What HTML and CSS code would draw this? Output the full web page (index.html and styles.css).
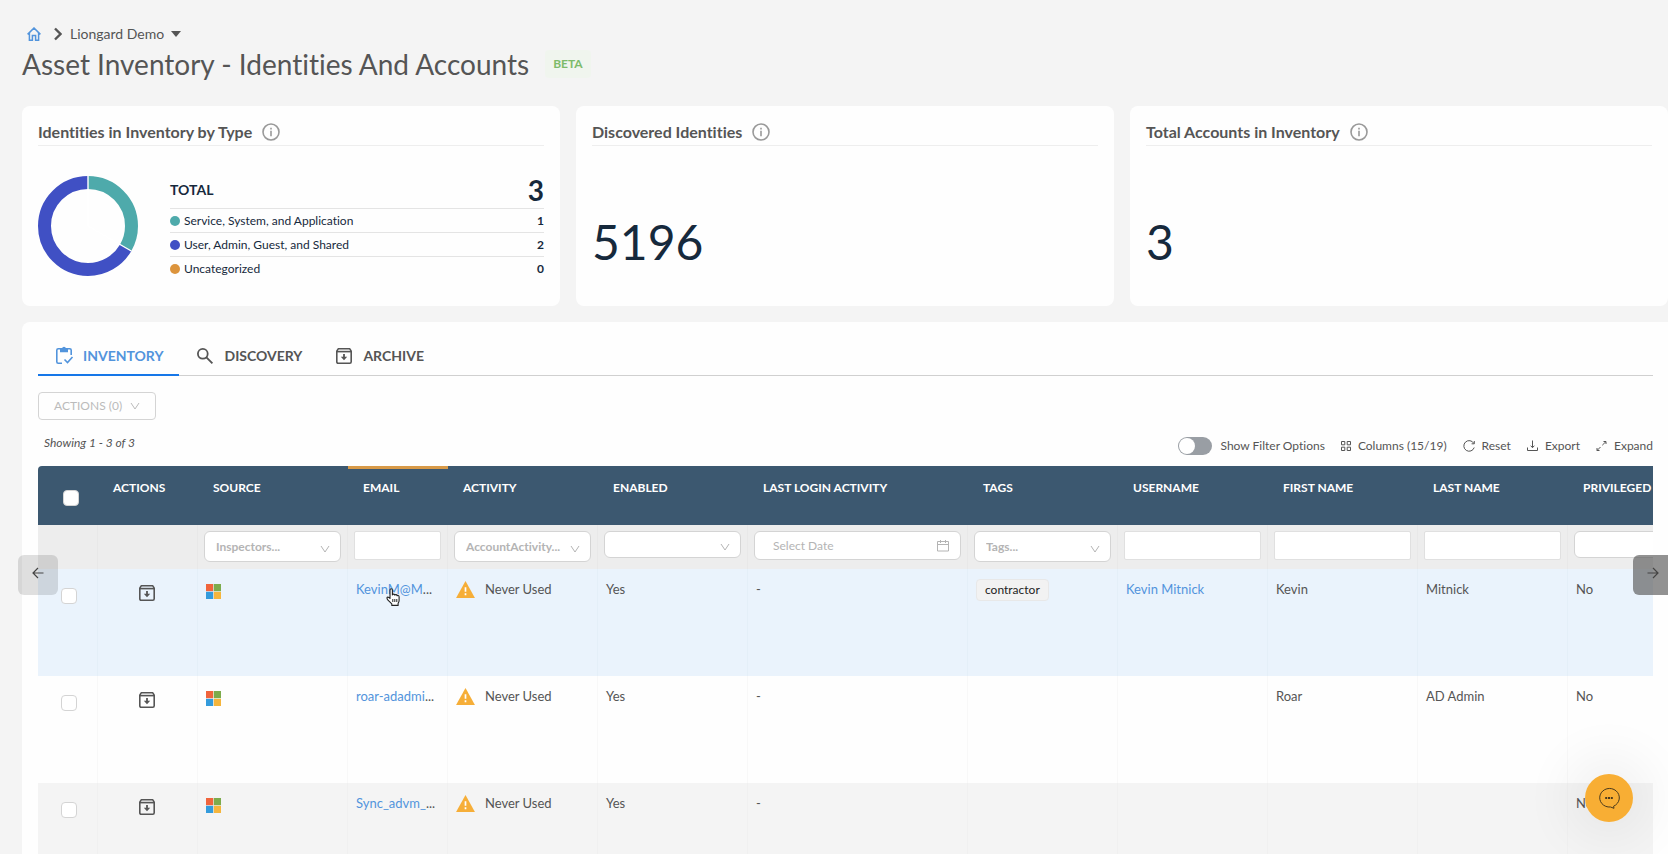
FILE: index.html
```html
<!DOCTYPE html>
<html lang="en">
	<head>
		<meta charset="UTF-8" />
		<meta name="viewport" content="width=device-width, initial-scale=1.0" />
		<title>Asset Inventory - Identities And Accounts</title>
		<link rel="stylesheet" href="styles.css">
	</head>
	<body>
		<!-- shared icons -->
		<svg class="sprite" aria-hidden="true">
			<symbol id="info" viewBox="0 0 18 18">
				<circle cx="9" cy="9" r="8" fill="none" stroke="currentColor" stroke-width="1.6" />
				<path d="M8.2 7.8h1.6v5.4H8.2zM8.2 4.8h1.6v1.6H8.2z" fill="currentColor" />
			</symbol>
			<symbol id="down" viewBox="0 0 10 10">
				<path d="M1 2l4 6 4-6" fill="none" stroke="currentColor" stroke-width="1" />
			</symbol>
			<symbol id="archive" viewBox="0 0 16 16">
				<path d="M2.2 .8h11.6l1.4 2.4v10.6q0 1.4-1.4 1.4H2.2q-1.4 0-1.4-1.4V3.2z" fill="none" stroke="currentColor" stroke-width="1.6" stroke-linejoin="round" />
				<path d="M1 3.6h14" stroke="currentColor" stroke-width="1.6" />
				<path d="M7.1 6h1.8v2.8h2.3L8 12.2 4.800 8.800h2.300z" fill="currentColor" />
			</symbol>
			<symbol id="windows" viewBox="0 0 15 15">
				<path fill="#f0643c" d="M0 0h7.2v7.2H0z" />
				<path fill="#7cab4c" d="M7.800 0H15v7.200H7.800z" />
				<path fill="#349bdc" d="M0 7.800h7.200V15H0z" />
				<path fill="#f5b53c" d="M7.800 7.800H15V15H7.800z" />
			</symbol>
			<symbol id="warn" viewBox="0 0 20 18">
				<path fill="#f6ae38" d="M10 0l10 18H0z" />
				<path stroke="#fff" stroke-width="1.8" d="M10 6.5v5M10 13v2" />
			</symbol>
		</svg>

		<div class="page">
			<header class="header">
				<nav class="crumbs">
					<a href="#" class="home" aria-label="Home">
						<svg width="14" height="14" viewBox="0 0 14 14" fill="none" stroke="currentColor" stroke-width="1.5">
							<path d="M.6 7.4L7 1l6.4 6.4M2.4 6v7.2h3V8.4h3.2v4.8h3V6" />
						</svg>
					</a>
					<svg width="8" height="14" viewBox="0 0 8 14" fill="none" stroke="currentColor" stroke-width="2.4">
						<path d="M1 1.5L6.5 7 1 12.5" />
					</svg>
					<button class="client">Liongard Demo
						<svg width="10" height="6" viewBox="0 0 10 6"><path d="M0 0h10L5 6z" fill="currentColor" /></svg>
					</button>
				</nav>
				<div class="title">
					<h1>Asset Inventory - Identities And Accounts</h1>
					<span class="beta">BETA</span>
				</div>
			</header>

			<section class="cards">
				<div class="card">
					<h2>Identities in Inventory by Type <svg class="info"><use href="#info" /></svg></h2>
					<div class="types">
						<svg class="donut" viewBox="0 0 100 100" fill="none" stroke-width="13">
							<circle cx="50" cy="50" r="43.5" stroke="#4050c4" pathLength="300" stroke-dasharray="200 100" stroke-dashoffset="-100" transform="rotate(-90 50 50)" />
							<circle cx="50" cy="50" r="43.5" stroke="#4eaaab" pathLength="300" stroke-dasharray="100 200" transform="rotate(-90 50 50)" />
							<path d="M50 50V0M50 50l43.3 25" stroke="#fff" stroke-width="1.4" />
						</svg>
						<dl class="legend">
							<div class="total"><dt>TOTAL</dt><dd>3</dd></div>
							<div><dt><i class="dot teal"></i>Service, System, and Application</dt><dd>1</dd></div>
							<div><dt><i class="dot blue"></i>User, Admin, Guest, and Shared</dt><dd>2</dd></div>
							<div><dt><i class="dot orange"></i>Uncategorized</dt><dd>0</dd></div>
						</dl>
					</div>
				</div>
				<div class="card">
					<h2>Discovered Identities <svg class="info"><use href="#info" /></svg></h2>
					<p class="number">5196</p>
				</div>
				<div class="card">
					<h2>Total Accounts in Inventory <svg class="info"><use href="#info" /></svg></h2>
					<p class="number">3</p>
				</div>
			</section>

			<main class="panel">
				<div class="tabs" role="tablist">
					<button class="tab current" role="tab" aria-selected="true">
						<svg width="20" height="20" viewBox="0 0 20 20" fill="none" stroke="currentColor" stroke-width="1.6">
							<path d="M8 17.2H4.2q-1.4 0-1.4-1.4V4.2q0-1.4 1.4-1.4h11.6q1.4 0 1.4 1.4V9" />
							<path d="M6 2.6h2Q8.3 .8 10 .8t2 1.8h2v3.6H6z" fill="currentColor" stroke="none" />
							<path d="M10.500 13.500l3 3 5-5.500" />
						</svg>
						INVENTORY
					</button>
					<button class="tab" role="tab">
						<svg width="20" height="20" viewBox="0 0 20 20" fill="none" stroke="currentColor" stroke-width="1.8">
							<circle cx="7.8" cy="7.8" r="4.9" />
							<path d="M11.4 11.4l6 6" />
						</svg>
						DISCOVERY
					</button>
					<button class="tab" role="tab">
						<svg width="20" height="20" viewBox="-2 -2 20 20"><use href="#archive" width="16" height="16" /></svg>
						ARCHIVE
					</button>
				</div>

				<button class="bulk" disabled>ACTIONS (0) <svg><use href="#down" /></svg></button>

				<div class="toolbar">
					<span class="showing">Showing 1 - 3 of 3</span>
					<label class="toggle"><input type="checkbox" role="switch" /> Show Filter Options</label>
					<button>
						<svg width="10" height="10" viewBox="0 0 10 10" fill="none" stroke="currentColor"><path d="M.5.5h3.300v3.300H.5zM6.200.5h3.300v3.300H6.200zM.5 6.200h3.300v3.300H.5zM6.200 6.200h3.300v3.300H6.200z" /></svg>
						Columns (15/19)
					</button>
					<button>
						<svg width="12" height="12" viewBox="0 0 12 12" fill="none" stroke="currentColor"><path d="M10.8 3.4A5.3 5.3 0 1 0 11.2 7.5M11.3 1v2.8H8.6" /></svg>
						Reset
					</button>
					<button>
						<svg width="11" height="12" viewBox="0 0 11 12" fill="none" stroke="currentColor"><path d="M.5 7.5v3h10v-3M5.5.5v7M3.7 5.7l1.8 2 1.8-2" /></svg>
						Export
					</button>
					<button>
						<svg width="11" height="12" viewBox="0 0 11 12" fill="none" stroke="currentColor"><path d="M6.300 5.200l3.700-3.700M7.500 1.500H10V4M4.500 7L1 10.500M1 8v2.500h2.500" /></svg>
						Expand
					</button>
				</div>

				<div class="scroller">
					<table>
						<colgroup>
							<col class="c-check"><col class="c-small"><col><col class="c-small"><col><col><col class="c-date"><col><col><col><col><col>
						</colgroup>
						<thead>
							<tr class="heads">
								<th class="check"><input type="checkbox" aria-label="Select all" /></th>
								<th>ACTIONS</th>
								<th>SOURCE</th>
								<th class="sorted">EMAIL</th>
								<th>ACTIVITY</th>
								<th>ENABLED</th>
								<th>LAST LOGIN ACTIVITY</th>
								<th>TAGS</th>
								<th>USERNAME</th>
								<th>FIRST NAME</th>
								<th>LAST NAME</th>
								<th>PRIVILEGED</th>
							</tr>
							<tr class="filters">
								<td></td>
								<td></td>
								<td><label class="pick tall"><select aria-label="Source"><option>Inspectors...</option></select><svg><use href="#down" /></svg></label></td>
								<td><input type="text" aria-label="Email" /></td>
								<td><label class="pick tall"><select aria-label="Activity"><option>AccountActivity...</option></select><svg><use href="#down" /></svg></label></td>
								<td><label class="pick"><select aria-label="Enabled"><option></option></select><svg><use href="#down" /></svg></label></td>
								<td>
									<label class="pick date">
										<input type="text" placeholder="Select Date" aria-label="Last login activity" />
										<svg viewBox="0 0 12 12" fill="none" stroke="currentColor"><path d="M.5 1.5h11v9.5H.5zM.5 4.5h11M3.5 0v3M8.5 0v3" /></svg>
									</label>
								</td>
								<td><label class="pick tall"><select aria-label="Tags"><option>Tags...</option></select><svg><use href="#down" /></svg></label></td>
								<td><input type="text" aria-label="Username" /></td>
								<td><input type="text" aria-label="First name" /></td>
								<td><input type="text" aria-label="Last name" /></td>
								<td><label class="pick"><select aria-label="Privileged"><option></option></select><svg><use href="#down" /></svg></label></td>
							</tr>
						</thead>
						<tbody>
							<tr class="hovered">
								<td class="check"><input type="checkbox" aria-label="Select KevinM" /></td>
								<td class="act"><button aria-label="Archive"><svg><use href="#archive" /></svg></button></td>
								<td><svg class="source"><use href="#windows" /></svg></td>
								<td class="email">
									<a href="#">KevinM@M</a>...
									<svg class="pointer" width="14" height="18" viewBox="0 0 14 18">
										<path d="M4 10.5V2q0-1.3 1.2-1.3T6.4 2v5q.2-1 1.3-.9 1 .1 1.1 1.1.4-.8 1.3-.6.9.2 1 1.2.5-.6 1.2-.3.8.3.8 1.4v3.5q0 1.4-1 3v2H5.8v-1.500L2 12.200Q.4 10 1.300 9.300q1-.7 2.700 1.200z" fill="#fff" stroke="#222" stroke-width="1.1" stroke-linejoin="round" />
										<path d="M6.8 11v3M8.8 11v3M10.8 11v3" stroke="#222" />
									</svg>
								</td>
								<td><span class="activity"><svg><use href="#warn" /></svg>Never Used</span></td>
								<td>Yes</td>
								<td>-</td>
								<td><span class="tag">contractor</span></td>
								<td><a href="#">Kevin Mitnick</a></td>
								<td>Kevin</td>
								<td>Mitnick</td>
								<td>No</td>
							</tr>
							<tr>
								<td class="check"><input type="checkbox" aria-label="Select roar-adadmin" /></td>
								<td class="act"><button aria-label="Archive"><svg><use href="#archive" /></svg></button></td>
								<td><svg class="source"><use href="#windows" /></svg></td>
								<td class="email"><a href="#">roar-adadmi</a>...</td>
								<td><span class="activity"><svg><use href="#warn" /></svg>Never Used</span></td>
								<td>Yes</td>
								<td>-</td>
								<td></td>
								<td></td>
								<td>Roar</td>
								<td>AD Admin</td>
								<td>No</td>
							</tr>
							<tr>
								<td class="check"><input type="checkbox" aria-label="Select Sync_advm" /></td>
								<td class="act"><button aria-label="Archive"><svg><use href="#archive" /></svg></button></td>
								<td><svg class="source"><use href="#windows" /></svg></td>
								<td class="email"><a href="#">Sync_advm_</a>...</td>
								<td><span class="activity"><svg><use href="#warn" /></svg>Never Used</span></td>
								<td>Yes</td>
								<td>-</td>
								<td></td>
								<td></td>
								<td></td>
								<td></td>
								<td>No</td>
							</tr>
						</tbody>
					</table>
				</div>
			</main>
		</div>

		<!-- floating controls -->
		<button class="slide left" aria-label="Scroll left">
			<svg width="12" height="12" viewBox="0 0 12 12" fill="none" stroke="currentColor" stroke-width="1.2"><path d="M11.500 6H1M6 1L1 6l5 5" /></svg>
		</button>
		<button class="slide right" aria-label="Scroll right">
			<svg width="12" height="12" viewBox="0 0 12 12" fill="none" stroke="currentColor" stroke-width="1.2"><path d="M.5 6H11M6 1l5 5-5 5" /></svg>
		</button>
		<button class="chat" aria-label="Chat">
			<svg width="22" height="22" viewBox="0 0 22 22" fill="none" stroke="currentColor">
				<path d="M15.600 19.200A9.800 9.300 0 1 0 12.500 20L16 21.300z" stroke-linejoin="round" />
				<path d="M7.2 11h2M10 11h2M12.8 11h2" stroke-width="2" />
			</svg>
		</button>
	</body>
</html>
```

FILE: styles.css
```css
* {
	box-sizing: border-box;
	margin: 0;
	padding: 0;
}
body {
	background: #f4f4f4;
	color: #555;
	font-family: Lato, sans-serif;
	font-size: 14px;
	line-height: 20px;
	font-variant-ligatures: none;
}
a {
	color: #5294dc;
	text-decoration: none;
}
button,
input,
select {
	font: inherit;
	color: inherit;
}
button {
	background: none;
	border: 0;
}
svg {
	flex: none;
}
.sprite {
	position: absolute;
	width: 0;
	height: 0;
}
.page {
	height: 100vh;
	overflow: hidden;
	padding: 24px 0 0 22px;
}

/* header */
.crumbs {
	display: flex;
	align-items: center;
	padding-left: 5px;
}
.home {
	display: flex;
	margin-right: 13px;
}
.client {
	display: flex;
	align-items: center;
	gap: 7px;
	margin-left: 8px;
}
.title {
	display: flex;
	align-items: center;
	gap: 16px;
	height: 40px;
}
h1 {
	font-size: 28px;
	line-height: 40px;
	font-weight: 400;
}
.beta {
	padding: 4px 8px;
	border-radius: 4px;
	background: #f0f5ee;
	color: #7dbb6a;
	font-size: 12px;
	font-weight: 700;
}

/* cards */
.cards {
	display: grid;
	grid-template-columns: repeat(3, 1fr);
	gap: 16px;
	margin-top: 22px;
}
.card {
	height: 200px;
	padding: 16px;
	border-radius: 8px;
	background: #fefefe;
}
h2 {
	display: flex;
	align-items: center;
	gap: 10px;
	height: 24px;
	padding-bottom: 3px;
	border-bottom: 1px solid #eee;
	font-size: 16px;
	font-weight: 700;
}
.info {
	width: 18px;
	height: 18px;
	color: #999;
}
.types {
	display: flex;
	align-items: center;
	gap: 32px;
	margin-top: 26px;
}
.donut {
	width: 100px;
	height: 100px;
}
.legend {
	flex: 1;
	color: #16293c;
	font-size: 12px;
}
.legend div {
	display: flex;
	justify-content: space-between;
	align-items: center;
	height: 24px;
}
.legend div + div {
	border-top: 1px solid #e4e4e4;
}
.legend .total {
	height: 36px;
	font-size: 14px;
	font-weight: 700;
}
.legend dt {
	display: flex;
	align-items: center;
	gap: 4px;
}
.legend dd {
	font-weight: 700;
}
.total dd {
	font-size: 28px;
}
.dot {
	width: 10px;
	height: 10px;
	border-radius: 50%;
}
.teal {
	background: #4eaaab;
}
.blue {
	background: #4050c4;
}
.orange {
	background: #dc943c;
}
.number {
	margin-top: 64px;
	color: #16293c;
	font-size: 48px;
	line-height: 64px;
}

/* inventory panel */
.panel {
	margin-top: 16px;
	padding: 16px 15px 0 16px;
	border-radius: 8px 0 0 0;
	background: #fefefe;
}
.tabs {
	display: flex;
	height: 38px;
	border-bottom: 1px solid #d0d0d0;
}
.tab {
	display: flex;
	align-items: center;
	gap: 9px;
	height: 38px;
	padding: 0 16px;
	border-bottom: 2px solid transparent;
	font-size: 14px;
	font-weight: 700;
}
.tab.current {
	border-color: #1677e8;
	color: #5294dc;
}
.bulk {
	display: flex;
	align-items: center;
	gap: 8px;
	height: 28px;
	margin-top: 16px;
	padding: 0 15px;
	border: 1px solid #d4d4d4;
	border-radius: 4px;
	color: #bbb;
	font-size: 12px;
}
.bulk svg,
.pick svg {
	width: 10px;
	height: 10px;
}
.toolbar {
	display: flex;
	align-items: center;
	gap: 16px;
	height: 46px;
	padding-top: 5px;
	font-size: 12px;
}
.showing {
	margin-right: auto;
	padding: 0 0 5px 6px;
	font-style: italic;
}
.toolbar button {
	display: flex;
	align-items: center;
	gap: 7px;
}
.toggle {
	display: flex;
	align-items: center;
	gap: 9px;
}
.toggle input {
	appearance: none;
	width: 34px;
	height: 18px;
	padding: 1px;
	border-radius: 9px;
	background: #999ea4;
}
.toggle input::before {
	content: "";
	display: block;
	width: 16px;
	height: 16px;
	border-radius: 50%;
	background: #fff;
}

/* table */
.scroller {
	overflow: hidden;
	border-radius: 4px 0 0 0;
}
table {
	table-layout: fixed;
	width: 1680px;
	border-collapse: separate;
	border-spacing: 0;
}
col {
	width: 150px;
}
.c-check {
	width: 60px;
}
.c-small {
	width: 100px;
}
.c-date {
	width: 220px;
}
th {
	height: 59px;
	padding: 11px 15px 0;
	border-top: 3px solid transparent;
	background: #3c5870;
	color: #fff;
	font-size: 12px;
	font-weight: 700;
	line-height: 16px;
	text-align: left;
	vertical-align: top;
	white-space: nowrap;
}
th.sorted {
	border-color: #d89a48;
}
.filters td {
	height: 44px;
	padding: 6px;
	border-right: 1px solid #e8e8e8;
	background: #ededed;
	vertical-align: top;
}
.filters input,
.filters select {
	display: block;
	width: 100%;
	height: 29px;
	border: 1px solid #e0e0e0;
	border-radius: 2px;
	background: #fff;
}
.pick {
	display: grid;
	grid-template-columns: 1fr;
	align-items: center;
	color: #b4b4b4;
	font-size: 12px;
}
.pick > * {
	grid-area: 1 / 1;
}
.pick svg {
	justify-self: end;
	margin: 4px 11px 0 0;
}
.filters .pick select {
	appearance: none;
	height: 27px;
	padding: 0 24px 0 11px;
	border-color: #d4d4d4;
	border-radius: 6px;
	font-weight: 700;
}
.filters .tall select {
	height: 31px;
}
.filters .date input {
	padding: 0 30px 0 18px;
	border-color: #d4d4d4;
	border-radius: 6px;
}
.date input::placeholder {
	color: #b4b4b4;
}
.pick.date svg {
	width: 12px;
	height: 12px;
	margin: 0 12px 0 0;
}
tbody td {
	height: 107px;
	padding: 10px 8px;
	border-right: 1px solid #f8f8f8;
	font-size: 13px;
	vertical-align: top;
	white-space: nowrap;
}
tbody tr:nth-child(3) td {
	border-color: #f0f0f0;
	background: #f4f4f4;
}
tbody .hovered td {
	border-color: #e4eff8;
	background: #eaf3fc;
}
.check input {
	appearance: none;
	display: block;
	width: 16px;
	height: 16px;
	border: 1px solid #d4d4d4;
	border-radius: 4px;
	background: #fff;
}
th.check {
	padding: 21px 0 0 25px;
}
td.check {
	padding: 19px 0 0 23px;
}
td.act {
	padding: 16px 0 0 41px;
}
.act svg {
	display: block;
	width: 16px;
	height: 16px;
}
.source {
	display: block;
	width: 15px;
	height: 15px;
	margin-top: 5px;
}
tbody .email {
	position: relative;
}
.pointer {
	position: absolute;
	left: 38px;
	top: 19px;
}
.activity {
	display: flex;
	align-items: center;
	gap: 10px;
}
.activity svg {
	width: 19px;
	height: 17px;
}
.tag {
	display: inline-block;
	height: 22px;
	padding: 0 8px;
	border: 1px solid #e8e8e8;
	border-radius: 4px;
	background: #f2f2f2;
	color: #222;
	font-size: 12px;
}

/* floating controls */
.slide {
	position: fixed;
	top: 555px;
	display: flex;
	align-items: center;
	height: 40px;
	padding-bottom: 4px;
	color: #444;
}
.slide.left {
	left: 18px;
	width: 40px;
	padding-left: 14px;
	border-radius: 6px;
	background: rgba(0, 0, 0, 0.12);
}
.slide.right {
	right: 0;
	width: 35px;
	padding-left: 14px;
	border-radius: 6px 0 0 6px;
	background: rgba(90, 90, 90, 0.66);
}
.chat {
	position: fixed;
	right: 35px;
	bottom: 32px;
	display: flex;
	align-items: center;
	justify-content: center;
	width: 48px;
	height: 48px;
	border-radius: 50%;
	background: #f8ae34;
	color: #4a3a1c;
	box-shadow: 0 0 50px 20px rgba(0, 0, 0, 0.05);
}
```
